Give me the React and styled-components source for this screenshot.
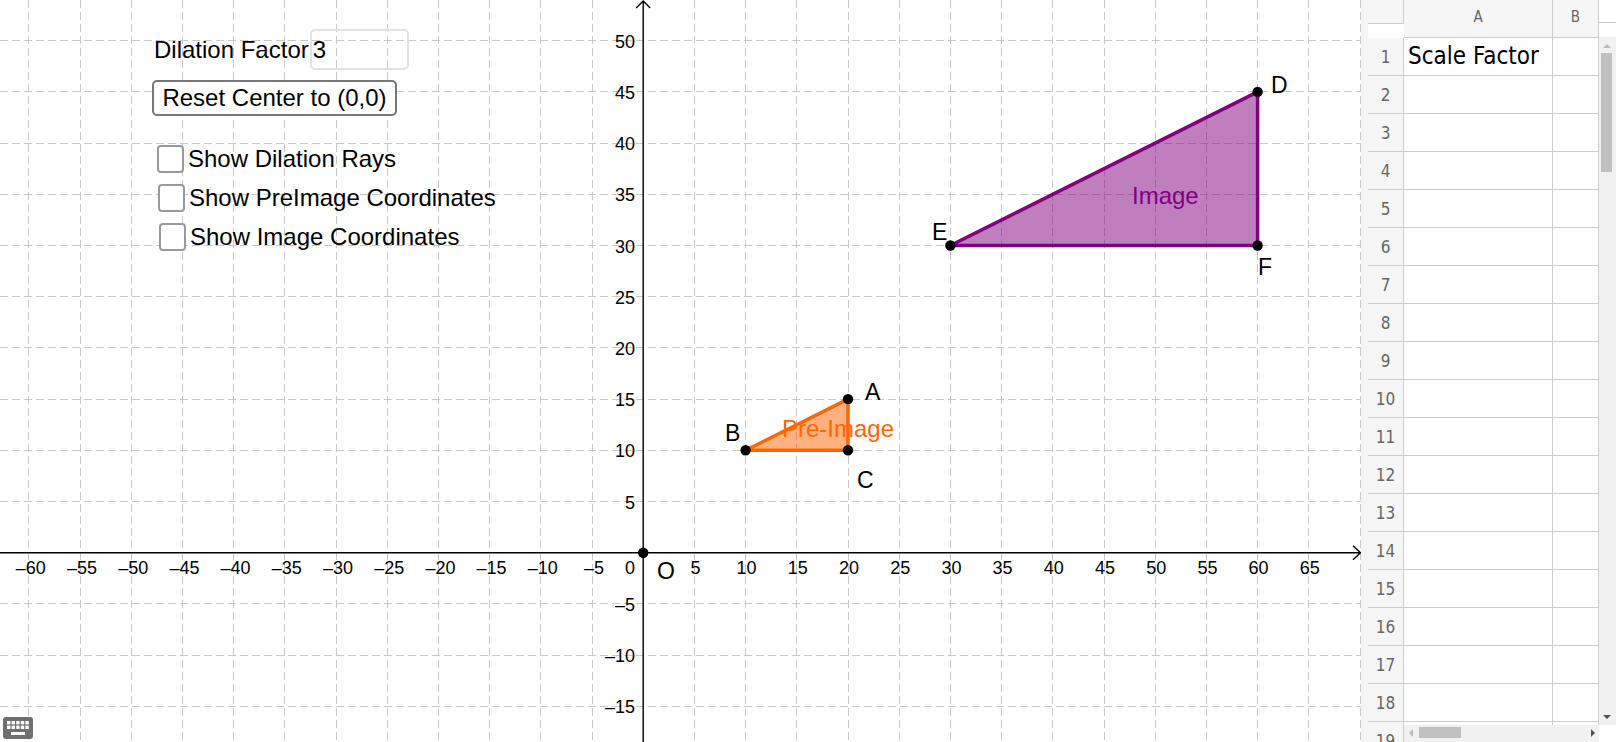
import React from 'react';
import styled, { createGlobalStyle } from 'styled-components';

const GlobalStyle = createGlobalStyle`
  html, body {
    margin: 0;
    padding: 0;
    background: #fff;
    overflow: hidden;
  }
`;

const Page = styled.div`
  display: flex;
  width: 1616px;
  height: 742px;
  overflow: hidden;
  font-family: "Liberation Sans", Arial, sans-serif;
`;

/* graphics view */
const GraphPanel = styled.div`
  position: relative;
  flex: 0 0 1361px;
  height: 100%;
  background: #fff;
`;

const GraphSvg = styled.svg`
  display: block;
  width: 100%;
  height: 100%;
`;

const GridLine = styled.line`
  stroke: #c8c8c8;
  stroke-width: 1;
  stroke-dasharray: 8 4;
`;

const AxisLine = styled.path`
  fill: none;
  stroke: #000;
  stroke-width: 1.4;
`;

const TickText = styled.text`
  font-family: "Liberation Sans", Arial, sans-serif;
  font-size: 18px;
  fill: #000;
`;

const PointName = styled.text`
  font-family: "Liberation Sans", Arial, sans-serif;
  font-size: 23px;
  fill: #000;
`;

const ShapeName = styled.text`
  font-family: "Liberation Sans", Arial, sans-serif;
  font-size: 24px;
  fill: ${(p) => p.$color};
`;

const Triangle = styled.polygon`
  fill: ${(p) => p.$color};
  fill-opacity: 0.5;
  stroke: ${(p) => p.$color};
  stroke-width: 3.5;
  stroke-linejoin: round;
`;

const Dot = styled.circle`
  fill: #000;
`;

const DilationRow = styled.div`
  position: absolute;
  left: 154px;
  top: 29px;
  display: flex;
  align-items: center;
  gap: 1px;
  font-size: 24px;
  line-height: 40px;
  color: #000;
`;

const FactorInput = styled.input`
  box-sizing: border-box;
  width: 99px;
  height: 41px;
  padding: 0 0 0 1px;
  border: 2px solid #e2e2e2;
  border-radius: 5px;
  background: transparent;
  font: inherit;
  color: #000;
  outline: none;
`;

const ResetButton = styled.button`
  position: absolute;
  left: 152px;
  top: 80px;
  box-sizing: border-box;
  width: 245px;
  height: 36px;
  padding: 0;
  border: 2px solid #777;
  border-radius: 5px;
  background: #fff;
  font-family: inherit;
  font-size: 24px;
  line-height: 32px;
  color: #000;
`;

const CheckRow = styled.label`
  position: absolute;
  left: ${(p) => p.$left}px;
  top: ${(p) => p.$top}px;
  display: flex;
  align-items: center;
  gap: 4px;
  font-size: 24px;
  line-height: 28px;
  color: #000;
  white-space: nowrap;
`;

const CheckBox = styled.input`
  appearance: none;
  box-sizing: border-box;
  width: 27px;
  height: 28px;
  margin: 0;
  border: 2px solid #999;
  border-radius: 4px;
  background: #fff;
`;

const KeyboardButton = styled.div`
  position: absolute;
  left: 3px;
  bottom: 3px;
  width: 30px;
  height: 22px;
  line-height: 0;
`;

/* spreadsheet view */
const SheetPanel = styled.div`
  position: relative;
  flex: 1;
  display: flex;
  height: 100%;
  padding-left: 7px;
  background: linear-gradient(to right, #f4f4f4 7px, #fff 7px);
  overflow: hidden;
`;

const SheetGrid = styled.div`
  flex: 0 0 231px;
  display: grid;
  grid-template-columns: 36px 149px 46px;
  grid-auto-rows: 38px;
  grid-template-rows: 38px;
  align-content: start;
  font-family: "DejaVu Sans Condensed", "DejaVu Sans", sans-serif;
  font-stretch: condensed;
`;

const Corner = styled.div`
  box-sizing: border-box;
  height: 24px;
  background: #f6f6f6;
  border-right: 1px solid #cdcdcd;
  border-bottom: 1px solid #cdcdcd;
`;

const ColumnHead = styled.div`
  box-sizing: border-box;
  display: flex;
  align-items: center;
  justify-content: center;
  padding-bottom: 3px;
  background: #f6f6f6;
  border-right: 1px solid #cdcdcd;
  border-bottom: 1px solid #cdcdcd;
  font-size: 15px;
  color: #666;
`;

const RowHead = styled.div`
  box-sizing: border-box;
  display: flex;
  align-items: center;
  justify-content: center;
  background: #f6f6f6;
  border-right: 1px solid #cdcdcd;
  border-bottom: 1px solid #cdcdcd;
  font-size: 17px;
  color: #666;
`;

const Cell = styled.div`
  box-sizing: border-box;
  display: flex;
  align-items: center;
  padding: 0 0 2px 4px;
  border-right: 1px solid #cdcdcd;
  border-bottom: 1px solid #cdcdcd;
  font-size: 24px;
  color: #000;
  white-space: nowrap;
`;

const VerticalBar = styled.div`
  flex: 0 0 17px;
  display: flex;
  flex-direction: column;
  height: 725px;
`;

const CornerLine = styled.div`
  box-sizing: border-box;
  flex: 0 0 37px;
  border-top: 23px solid #fff;
  border-bottom: 14px solid #fff;
  position: relative;

  &::after {
    content: "";
    position: absolute;
    left: 0;
    right: 0;
    top: -1px;
    height: 1px;
    background: #cdcdcd;
  }
`;

const VerticalTrack = styled.div`
  flex: 1;
  position: relative;
  background: #f1f1f1;
`;

const VerticalThumb = styled.div`
  position: absolute;
  left: 2px;
  top: 16px;
  width: 11px;
  height: 119px;
  background: #c0c0c0;
`;

const ArrowUp = styled.div`
  position: absolute;
  left: 4px;
  top: 7px;
  border-left: 4px solid transparent;
  border-right: 4px solid transparent;
  border-bottom: 4px solid #bbb;
`;

const ArrowDown = styled.div`
  position: absolute;
  left: 4px;
  bottom: 6px;
  border-left: 4px solid transparent;
  border-right: 4px solid transparent;
  border-top: 4px solid #505050;
`;

const HorizontalBar = styled.div`
  position: absolute;
  left: 43px;
  bottom: 0;
  width: 195px;
  height: 17px;
  background: #f1f1f1;
`;

const HorizontalThumb = styled.div`
  position: absolute;
  left: 15px;
  top: 2px;
  width: 42px;
  height: 11px;
  background: #c0c0c0;
`;

const ArrowLeft = styled.div`
  position: absolute;
  left: 5px;
  top: 4px;
  border-top: 4px solid transparent;
  border-bottom: 4px solid transparent;
  border-right: 4px solid #bbb;
`;

const ArrowRight = styled.div`
  position: absolute;
  right: 4px;
  top: 4px;
  border-top: 4px solid transparent;
  border-bottom: 4px solid transparent;
  border-left: 4px solid #505050;
`;

const ox = 643.2;
const oy = 552.7;
const unit = 10.24;
const sx = (v) => ox + v * unit;
const sy = (v) => oy - v * unit;
const snap = (v) => Math.round(v - 0.5) + 0.5;

const xTicks = [];
for (let v = -60; v <= 70; v += 5) xTicks.push(v);
const yTicks = [];
for (let v = -15; v <= 50; v += 5) yTicks.push(v);

const label = (v) => (v < 0 ? `–${-v}` : `${v}`);
const pts = (list) => list.map(([x, y]) => `${sx(x)},${sy(y)}`).join(' ');

const preImage = [[20, 15], [10, 10], [20, 10]];
const image = [[60, 45], [30, 30], [60, 30]];

const pointNames = [
  ['A', 865, 400],
  ['B', 725, 441],
  ['C', 857, 488],
  ['D', 1271, 93],
  ['E', 932, 240],
  ['F', 1258, 275],
  ['O', 657, 579],
];

const Graph = () => (
  <GraphSvg viewBox="0 0 1361 742">
    {xTicks.map((v) => v !== 0 && (
      <GridLine key={v} x1={snap(sx(v))} x2={snap(sx(v))} y1="0" y2="742" />
    ))}
    {yTicks.map((v) => v !== 0 && (
      <GridLine key={v} x1="0" x2="1361" y1={snap(sy(v))} y2={snap(sy(v))} />
    ))}

    <AxisLine d={`M0 ${oy}H1360M1353 ${oy - 7}L1360.5 ${oy}L1353 ${oy + 7}`} />
    <AxisLine d={`M${ox} 742V1M${ox - 7} 8L${ox} 1L${ox + 7} 8`} />

    {xTicks.filter((v) => v !== 0 && v !== 70).map((v) => (
      <TickText key={v} x={sx(v) + (v < 0 ? 2 : 1)} y="574" textAnchor="middle">{label(v)}</TickText>
    ))}
    <TickText x="625" y="574">0</TickText>
    {yTicks.filter((v) => v !== 0).map((v) => (
      <TickText key={v} x="635" y={sy(v) + 7} textAnchor="end">{label(v)}</TickText>
    ))}

    <Triangle $color="#ff6600" points={pts(preImage)} />
    <Triangle $color="#800080" points={pts(image)} />
    <ShapeName $color="#ff6600" x="782" y="437">Pre-Image</ShapeName>
    <ShapeName $color="#800080" x="1132" y="204">Image</ShapeName>

    {[...preImage, ...image, [0, 0]].map(([x, y]) => (
      <Dot key={`${x}-${y}`} cx={sx(x)} cy={sy(y)} r="5.2" />
    ))}
    {pointNames.map(([name, x, y]) => (
      <PointName key={name} x={x} y={y}>{name}</PointName>
    ))}
  </GraphSvg>
);

const KeyboardIcon = () => (
  <svg width="30" height="22" viewBox="0 0 30 22">
    <rect width="30" height="22" rx="3" fill="#6f6f6f" />
    {[0, 1].map((row) => [0, 1, 2, 3, 4].map((col) => (
      <rect key={`${row}${col}`} x={4 + col * 4.6} y={4 + row * 4.6} width="3.4" height="3.4" fill="#fff" />
    )))}
    <rect x="8" y="15" width="14" height="3" fill="#fff" />
  </svg>
);

const rows = Array.from({ length: 19 }, (_, i) => i + 1);

const App = () => (
  <Page>
    <GlobalStyle />
    <GraphPanel>
      <Graph />
      <DilationRow>
        <span>Dilation Factor</span>
        <FactorInput defaultValue="3" />
      </DilationRow>
      <ResetButton>Reset Center to (0,0)</ResetButton>
      <CheckRow $left={157} $top={145}>
        <CheckBox type="checkbox" />
        Show Dilation Rays
      </CheckRow>
      <CheckRow $left={158} $top={184}>
        <CheckBox type="checkbox" />
        Show PreImage Coordinates
      </CheckRow>
      <CheckRow $left={159} $top={223}>
        <CheckBox type="checkbox" />
        Show Image Coordinates
      </CheckRow>
      <KeyboardButton>
        <KeyboardIcon />
      </KeyboardButton>
    </GraphPanel>

    <SheetPanel>
      <SheetGrid>
        <Corner />
        <ColumnHead>A</ColumnHead>
        <ColumnHead>B</ColumnHead>
        {rows.map((n) => (
          <React.Fragment key={n}>
            <RowHead>{n}</RowHead>
            <Cell>{n === 1 ? 'Scale Factor' : ''}</Cell>
            <Cell />
          </React.Fragment>
        ))}
      </SheetGrid>
      <VerticalBar>
        <CornerLine />
        <VerticalTrack>
          <ArrowUp />
          <VerticalThumb />
          <ArrowDown />
        </VerticalTrack>
      </VerticalBar>
      <HorizontalBar>
        <ArrowLeft />
        <HorizontalThumb />
        <ArrowRight />
      </HorizontalBar>
    </SheetPanel>
  </Page>
);

export default App;
